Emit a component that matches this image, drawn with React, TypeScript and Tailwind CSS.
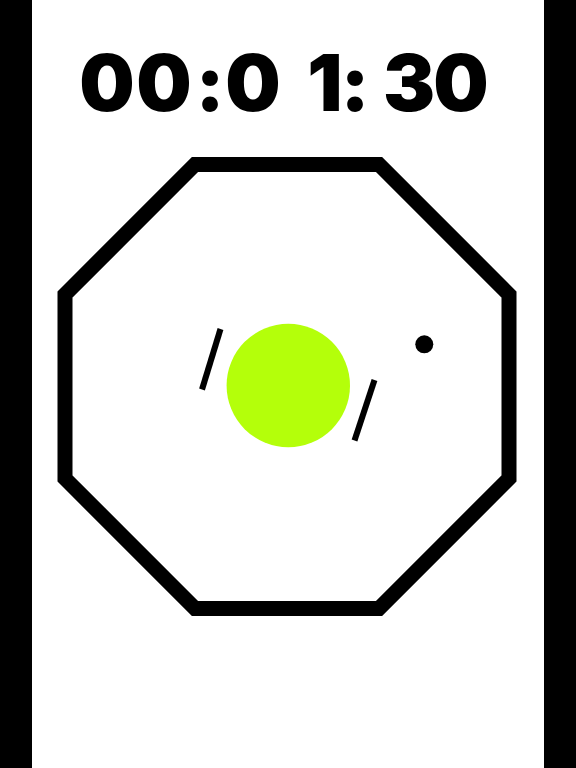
const cells: { ch: string; cls: string }[] = [
  { ch: "0", cls: "w-[50px] ml-[50px]" },
  { ch: "0", cls: "w-[50px] ml-[7px]" },
  { ch: ":", cls: "w-[20px] ml-[11px]" },
  { ch: "0", cls: "w-[50px] ml-[8px]" },
  { ch: " ", cls: "w-[34px]" },
  { ch: "1", cls: "w-[26px]" },
  { ch: ":", cls: "w-[20px] ml-[7px]" },
  { ch: " ", cls: "w-[21px]" },
  { ch: "3", cls: "w-[46px]" },
  { ch: "0", cls: "w-[50px] ml-[4px]" },
];

export default function App() {
  return (
    <div className="flex h-[768px] w-[576px] overflow-hidden bg-white">
      <div className="w-8 shrink-0 bg-black" />
      <div className="flex flex-1 flex-col">
        {/* timer */}
        <div className="mt-[38px] flex h-[90px] whitespace-pre text-[78px] font-black leading-[90px] text-black [font-family:Inter,'Noto_Sans',sans-serif]">
          {cells.map((c, i) => (
            <span key={i} className={`${c.cls} flex shrink-0 justify-center`}>
              {c.ch}
            </span>
          ))}
        </div>
        {/* arena */}
        <svg width="512" height="500" viewBox="0 0 512 500" className="mt-[12px] block">
          <polygon
            points="163,24.5 347,24.5 477,154.5 477,338.5 347,468.5 163,468.5 33,338.5 33,154.5"
            fill="none"
            stroke="#000"
            strokeWidth="15"
            strokeLinejoin="miter"
          />
          <circle cx="256.3" cy="245.5" r="61.7" fill="#b4ff0a" />
          <line x1="188.5" y1="189" x2="170" y2="249.5" stroke="#000" strokeWidth="6" />
          <line x1="342.5" y1="240" x2="322.5" y2="300.5" stroke="#000" strokeWidth="6" />
          <circle cx="392.3" cy="204.3" r="9" fill="#000" />
        </svg>
      </div>
      <div className="w-8 shrink-0 bg-black" />
    </div>
  );
}
